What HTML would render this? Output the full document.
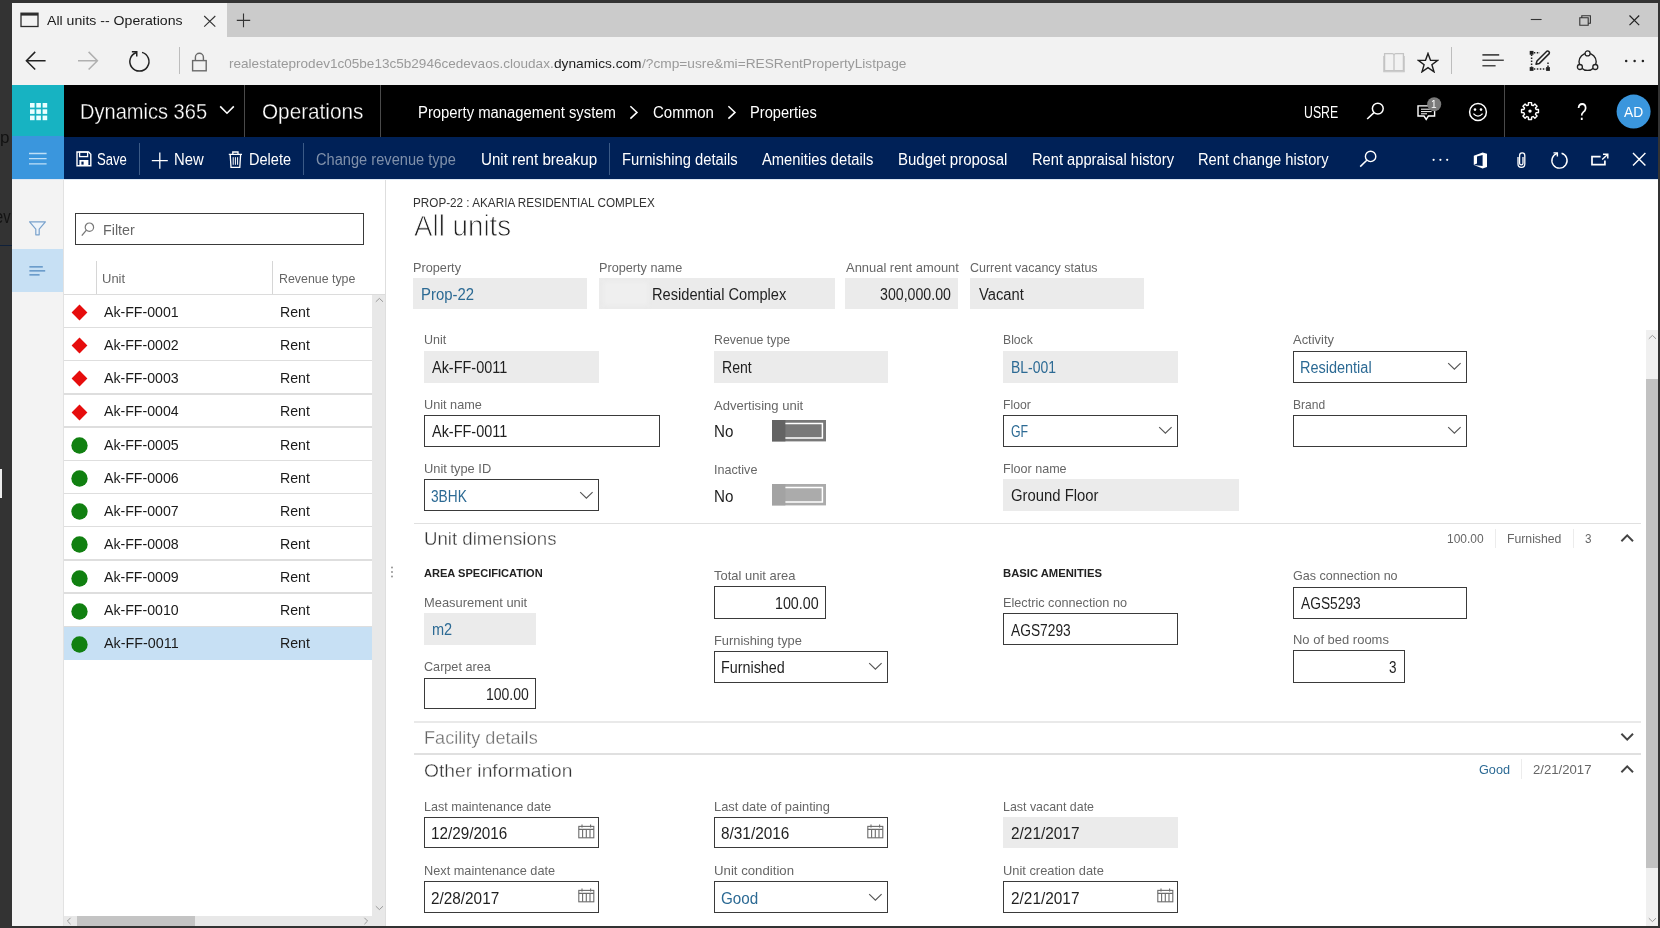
<!DOCTYPE html>
<html lang="en"><head><meta charset="utf-8"><title>All units -- Operations</title>
<style>
html,body{margin:0;padding:0}
body{width:1660px;height:928px;overflow:hidden;background:#333;position:relative;font-family:"Liberation Sans", sans-serif}
.b{position:absolute;display:block}
.t{position:absolute;white-space:pre;line-height:1;transform-origin:0 0;font-family:"Liberation Sans", sans-serif}
</style></head><body>
<div class="b" style="left:12.00px;top:3.00px;width:1646.00px;height:34.00px;background:#cbcbcb;"></div>
<div class="b" style="left:12.00px;top:3.00px;width:214.50px;height:34.00px;background:#f2f2f2;"></div>
<div class="b" style="left:12.00px;top:37.00px;width:1646.00px;height:48.00px;background:#f2f2f2;"></div>
<svg class="b" style="left:20.00px;top:12.00px;" width="19" height="16" viewBox="0 0 19 16"><rect x="1" y="1.2" width="17" height="13.3" fill="none" stroke="#2b2b2b" stroke-width="1.3"/><rect x="1" y="1.2" width="17" height="2.4" fill="#2b2b2b"/></svg>
<svg class="b" style="left:203.00px;top:14.50px;" width="14" height="13" viewBox="0 0 14 13"><path d="M1.2 1 L12.3 11.6 M12.3 1 L1.2 11.6" stroke="#333" stroke-width="1.1" fill="none"/></svg>
<svg class="b" style="left:236.00px;top:13.00px;" width="15" height="15" viewBox="0 0 15 15"><path d="M7.5 0.6 V14.2 M0.8 7.4 H14.2" stroke="#333" stroke-width="1.1" fill="none"/></svg>
<svg class="b" style="left:1530.00px;top:18.00px;" width="13" height="3" viewBox="0 0 13 3"><path d="M0.8 1.5 H11.6" stroke="#333" stroke-width="1.1"/></svg>
<svg class="b" style="left:1579.00px;top:15.00px;" width="13" height="11" viewBox="0 0 13 11"><path d="M0.8 2.8 H9.2 V10.2 H0.8 Z M2.8 2.8 V0.8 H11.4 V8.2 H9.2" stroke="#333" stroke-width="1.1" fill="none"/></svg>
<svg class="b" style="left:1629.00px;top:15.00px;" width="11" height="11" viewBox="0 0 11 11"><path d="M0.5 0.5 L10.2 10.2 M10.2 0.5 L0.5 10.2" stroke="#222" stroke-width="1.2" fill="none"/></svg>
<svg class="b" style="left:25.00px;top:51.00px;" width="22" height="20" viewBox="0 0 22 20"><path d="M20.6 9.7 H1.6 M10.2 0.9 L1.4 9.7 L10.2 18.5" stroke="#222" stroke-width="1.5" fill="none"/></svg>
<svg class="b" style="left:76.50px;top:51.00px;" width="22" height="20" viewBox="0 0 22 20"><path d="M1 9.7 H20 M11.6 0.9 L20.4 9.7 L11.6 18.5" stroke="#b0b0b0" stroke-width="1.5" fill="none"/></svg>
<svg class="b" style="left:127.15px;top:48.65px;" width="25.1" height="25.1" viewBox="0 0 25.1 25.1"><path d="M15.05 3.35 A9.55 9.55 0 1 1 9.45 3.45" stroke="#222" stroke-width="1.5" fill="none"/><path d="M4.85 2.85 H9.75 V7.55" stroke="#222" stroke-width="1.5" fill="none"/></svg>
<div class="b" style="left:179.00px;top:46.60px;width:1.20px;height:27.90px;background:#bdbdbd;"></div>
<svg class="b" style="left:190.50px;top:52.00px;" width="17" height="20" viewBox="0 0 17 20"><rect x="1.6" y="8.6" width="13.6" height="10.2" fill="none" stroke="#6a6a6a" stroke-width="1.4"/><path d="M4.4 8.6 V5.2 A4 4 0 0 1 12.4 5.2 V8.6" fill="none" stroke="#6a6a6a" stroke-width="1.4"/></svg>
<svg class="b" style="left:1383.00px;top:52.00px;" width="22" height="21" viewBox="0 0 22 21"><path d="M1.6 1.6 H9.4 Q11 1.8 11 3.4 V18.6 H1.6 Z M20.4 1.6 H12.6 Q11 1.8 11 3.4 V18.6 H20.4 Z" stroke="#c4c4c4" stroke-width="1.3" fill="none"/><path d="M0.8 4 V19.8 H21.2 V4" stroke="#c4c4c4" stroke-width="1.1" fill="none"/></svg>
<svg class="b" style="left:1417.00px;top:51.50px;" width="22" height="21" viewBox="0 0 22 21"><path d="M11 1.4 L13.5 8.3 L20.6 8.4 L14.9 12.8 L17 19.8 L11 15.6 L5 19.8 L7.1 12.8 L1.4 8.4 L8.5 8.3 Z" stroke="#1e1e1e" stroke-width="1.4" fill="none" stroke-linejoin="miter"/></svg>
<div class="b" style="left:1450.50px;top:46.60px;width:1.20px;height:27.90px;background:#bdbdbd;"></div>
<svg class="b" style="left:1481.00px;top:52.00px;" width="24" height="16" viewBox="0 0 24 16"><path d="M1.4 2.9 H18.2 M1.4 8.3 H22.8 M1.4 13.8 H14.6" stroke="#4a4a4a" stroke-width="1.6"/></svg>
<svg class="b" style="left:1528.50px;top:49.50px;" width="23" height="22" viewBox="0 0 23 22"><path d="M2.6 4.6 V17.4 M4.8 19 H17 M19 17 V11.2 M4.8 2.8 H11" stroke="#222" stroke-width="1.5" stroke-dasharray="1.5 1.5" fill="none"/><rect x="0.7" y="0.9" width="3.8" height="3.8" fill="#222"/><rect x="0.7" y="17.1" width="3.8" height="3.8" fill="#222"/><rect x="17.1" y="17.1" width="3.8" height="3.8" fill="#222"/><path d="M7 14.2 L8 11 L17.8 1.2 Q19.6 0.6 20.4 2.4 L20.2 3.6 L10.4 13.4 Z" stroke="#222" stroke-width="1.5" fill="none" stroke-linejoin="round"/></svg>
<svg class="b" style="left:1576.00px;top:49.50px;" width="24" height="22" viewBox="0 0 24 22"><circle cx="11.6" cy="11.8" r="8.6" fill="none" stroke="#222" stroke-width="1.4"/><circle cx="11.6" cy="3.4" r="2.5" fill="#f2f2f2" stroke="#222" stroke-width="1.3"/><circle cx="3.9" cy="17" r="2.5" fill="#f2f2f2" stroke="#222" stroke-width="1.3"/><circle cx="19.3" cy="17" r="2.5" fill="#f2f2f2" stroke="#222" stroke-width="1.3"/></svg>
<svg class="b" style="left:1624.00px;top:59.00px;" width="22" height="4" viewBox="0 0 22 4"><circle cx="2.2" cy="2" r="1.25" fill="#222"/><circle cx="10.6" cy="2" r="1.25" fill="#222"/><circle cx="18.9" cy="2" r="1.25" fill="#222"/></svg>
<div class="b" style="left:12.00px;top:85.00px;width:1646.00px;height:51.60px;background:#000;"></div>
<div class="b" style="left:12.00px;top:85.00px;width:51.70px;height:51.20px;background:#17b3c2;"></div>
<div class="b" style="left:244.20px;top:85.00px;width:1.20px;height:51.60px;background:#4a4a4a;"></div>
<div class="b" style="left:379.80px;top:85.00px;width:1.20px;height:51.60px;background:#4a4a4a;"></div>
<div class="b" style="left:1504.00px;top:85.00px;width:1.20px;height:51.60px;background:#4a4a4a;"></div>
<svg class="b" style="left:28.50px;top:102.00px;" width="19" height="19" viewBox="0 0 19 19"><rect x="1.0" y="1.0" width="4.6" height="4.6" fill="#eaffff"/><rect x="1.0" y="7.3" width="4.6" height="4.6" fill="#eaffff"/><rect x="1.0" y="13.6" width="4.6" height="4.6" fill="#eaffff"/><rect x="7.3" y="1.0" width="4.6" height="4.6" fill="#eaffff"/><rect x="7.3" y="7.3" width="4.6" height="4.6" fill="#eaffff"/><rect x="7.3" y="13.6" width="4.6" height="4.6" fill="#eaffff"/><rect x="13.6" y="1.0" width="4.6" height="4.6" fill="#eaffff"/><rect x="13.6" y="7.3" width="4.6" height="4.6" fill="#eaffff"/><rect x="13.6" y="13.6" width="4.6" height="4.6" fill="#eaffff"/></svg>
<svg class="b" style="left:218.50px;top:105.00px;" width="16" height="10" viewBox="0 0 16 10"><path d="M1.2 1.4 L8 8.2 L14.8 1.4" stroke="#fff" stroke-width="1.6" fill="none"/></svg>
<svg class="b" style="left:629.00px;top:104.50px;" width="10" height="15" viewBox="0 0 10 15"><path d="M1.4 1.2 L8 7.4 L1.4 13.6" stroke="#fff" stroke-width="1.5" fill="none"/></svg>
<svg class="b" style="left:727.00px;top:104.50px;" width="10" height="15" viewBox="0 0 10 15"><path d="M1.4 1.2 L8 7.4 L1.4 13.6" stroke="#fff" stroke-width="1.5" fill="none"/></svg>
<svg class="b" style="left:1365.50px;top:102.00px;" width="19" height="18" viewBox="0 0 19 18"><circle cx="11.8" cy="6.6" r="5.4" fill="none" stroke="#fff" stroke-width="1.5"/><path d="M8 10.6 L1.2 17" stroke="#fff" stroke-width="1.6"/></svg>
<svg class="b" style="left:1416.50px;top:104.50px;" width="19" height="16" viewBox="0 0 19 16"><path d="M1 0.9 H17.6 V11 H11.4 L9.2 14.4 L7 11 H1 Z" fill="none" stroke="#fff" stroke-width="1.4"/><path d="M4 4.2 H14.6 M4 6.6 H14.6 M4 8.8 H10" stroke="#fff" stroke-width="1"/></svg>
<svg class="b" style="left:1426.50px;top:97.00px;" width="15" height="15" viewBox="0 0 15 15"><circle cx="7.2" cy="7.2" r="7" fill="#7a7a7a"/></svg>
<svg class="b" style="left:1468.00px;top:101.50px;" width="20" height="20" viewBox="0 0 20 20"><circle cx="10" cy="10" r="8.4" fill="none" stroke="#fff" stroke-width="1.5"/><circle cx="7" cy="7.6" r="1.3" fill="#fff"/><circle cx="13" cy="7.6" r="1.3" fill="#fff"/><path d="M5.4 11.6 Q10 16.6 14.6 11.6" fill="none" stroke="#fff" stroke-width="1.4"/></svg>
<svg class="b" style="left:1520.30px;top:101.00px;" width="20" height="20" viewBox="0 0 20 20"><path d="M16.09 8.49 L18.46 8.55 L18.46 11.65 L16.09 11.71 L15.45 13.26 L17.07 14.99 L14.89 17.17 L13.16 15.55 L11.61 16.19 L11.55 18.56 L8.45 18.56 L8.39 16.19 L6.84 15.55 L5.11 17.17 L2.93 14.99 L4.55 13.26 L3.91 11.71 L1.54 11.65 L1.54 8.55 L3.91 8.49 L4.55 6.94 L2.93 5.21 L5.11 3.03 L6.84 4.65 L8.39 4.01 L8.45 1.64 L11.55 1.64 L11.61 4.01 L13.16 4.65 L14.89 3.03 L17.07 5.21 L15.45 6.94 Z" fill="none" stroke="#fff" stroke-width="1.4" stroke-linejoin="round"/><circle cx="10" cy="10.1" r="1.7" fill="#fff"/></svg>
<svg class="b" style="left:1616.00px;top:94.00px;" width="36" height="36" viewBox="0 0 36 36"><circle cx="17.6" cy="17.6" r="17" fill="#3a96dd"/></svg>
<div class="b" style="left:12.00px;top:136.60px;width:1646.00px;height:42.50px;background:#002157;"></div>
<div class="b" style="left:12.00px;top:136.20px;width:51.70px;height:42.90px;background:#3a96dd;"></div>
<svg class="b" style="left:28.00px;top:151.50px;" width="20" height="14" viewBox="0 0 20 14"><path d="M1 1.5 H18.6 M1 6.6 H18.6 M1 11.8 H18.6" stroke="#bfe0f7" stroke-width="1.3"/></svg>
<svg class="b" style="left:75.50px;top:151.00px;" width="16" height="16" viewBox="0 0 16 16"><path d="M1 1 H12.6 L14.8 3.2 V14.8 H1 Z" fill="none" stroke="#fff" stroke-width="1.4"/><rect x="3.6" y="1" width="8" height="4.6" fill="none" stroke="#fff" stroke-width="1.3"/><rect x="3.4" y="9" width="9" height="5.8" fill="#fff"/><rect x="5.4" y="10.6" width="2.2" height="3" fill="#002157"/></svg>
<div class="b" style="left:139.00px;top:143.00px;width:1.20px;height:31.50px;background:#3b5a86;"></div>
<svg class="b" style="left:151.00px;top:151.50px;" width="18" height="18" viewBox="0 0 18 18"><path d="M8.8 0.6 V16.8 M0.8 8.6 H16.8" stroke="#fff" stroke-width="1.3"/></svg>
<svg class="b" style="left:227.50px;top:151.00px;" width="15" height="18" viewBox="0 0 15 18"><path d="M0.8 3.4 H14 M4.8 3.2 V1 H10 V3.2 M2.2 3.6 L3 16.4 H11.8 L12.6 3.6" fill="none" stroke="#fff" stroke-width="1.3"/><path d="M5.2 6.2 V13.8 M7.4 6.2 V13.8 M9.6 6.2 V13.8" stroke="#fff" stroke-width="1"/></svg>
<div class="b" style="left:303.00px;top:143.00px;width:1.20px;height:31.50px;background:#3b5a86;"></div>
<div class="b" style="left:608.70px;top:143.00px;width:1.20px;height:31.50px;background:#3b5a86;"></div>
<svg class="b" style="left:1359.00px;top:149.50px;" width="19" height="18" viewBox="0 0 19 18"><circle cx="11.6" cy="6.4" r="5.2" fill="none" stroke="#fff" stroke-width="1.4"/><path d="M7.8 10.2 L1.2 16.6" stroke="#fff" stroke-width="1.5"/></svg>
<svg class="b" style="left:1432.00px;top:158.00px;" width="18" height="4" viewBox="0 0 18 4"><circle cx="1.6" cy="1.8" r="1.1" fill="#fff"/><circle cx="8.4" cy="1.8" r="1.1" fill="#fff"/><circle cx="15.2" cy="1.8" r="1.1" fill="#fff"/></svg>
<svg class="b" style="left:1473.00px;top:151.50px;" width="15" height="17" viewBox="0 0 15 17"><path d="M0.8 3.8 L9.6 0.6 L14 1.8 V15 L9.6 16.4 L0.8 13 L9.6 14 V3 L4 4.4 V11.6 L0.8 13 Z" fill="#fff"/></svg>
<svg class="b" style="left:1515.50px;top:151.00px;" width="11" height="18" viewBox="0 0 11 18"><path d="M2 6 V13 A3.4 3.4 0 0 0 8.8 13 V4.4 A2.6 2.6 0 0 0 3.6 4.4 V12.2 A1.7 1.7 0 0 0 7 12.2 V6" fill="none" stroke="#fff" stroke-width="1.3"/></svg>
<svg class="b" style="left:1549.20px;top:149.50px;" width="21.2" height="21.2" viewBox="0 0 21.2 21.2"><path d="M12.59 3.28 A7.60 7.60 0 1 1 8.13 3.36" stroke="#fff" stroke-width="1.4" fill="none"/><path d="M4.47 2.88 H8.37 V6.62" stroke="#fff" stroke-width="1.4" fill="none"/></svg>
<svg class="b" style="left:1590.50px;top:152.50px;" width="19" height="14" viewBox="0 0 19 14"><path d="M9.6 3.6 H1 V11.6 H13.9 V7.4" fill="none" stroke="#fff" stroke-width="1.7"/><path d="M12 1.2 H16.8 V5.6 M16.6 1.4 L11.2 6.4" fill="none" stroke="#fff" stroke-width="1.4"/></svg>
<svg class="b" style="left:1632.00px;top:152.30px;" width="15" height="15" viewBox="0 0 15 15"><path d="M1 1 L13.4 13.4 M13.4 1 L1 13.4" stroke="#fff" stroke-width="1.4"/></svg>
<div class="b" style="left:12.00px;top:179.30px;width:1646.00px;height:746.70px;background:#fff;"></div>
<div class="b" style="left:12.00px;top:179.30px;width:51.30px;height:746.70px;background:#f3f3f3;"></div>
<div class="b" style="left:12.00px;top:249.00px;width:51.30px;height:42.80px;background:#c7e0f4;"></div>
<div class="b" style="left:63.30px;top:179.30px;width:1.00px;height:746.70px;background:#e2e2e2;"></div>
<div class="b" style="left:385.00px;top:179.30px;width:1.20px;height:746.70px;background:#dedede;"></div>
<div class="b" style="left:12.00px;top:179.10px;width:1646.00px;height:1.10px;background:#dfe9f4;"></div>
<svg class="b" style="left:28.00px;top:220.00px;" width="20" height="18" viewBox="0 0 20 18"><path d="M1.6 1.8 H17.4 L11.2 9.2 V14.8 H7.8 V9.2 Z" fill="#eef4fa" stroke="#7aa2cc" stroke-width="1.2" stroke-linejoin="round"/></svg>
<svg class="b" style="left:29.00px;top:264.50px;" width="18" height="14" viewBox="0 0 18 14"><path d="M0.4 1.8 H13.8 M0.4 5.8 H16.2 M0.4 9.9 H10.6" stroke="#4f86bd" stroke-width="1.25"/></svg>
<div class="b" style="left:75.00px;top:213.30px;width:289.00px;height:31.70px;background:#fff;border:1.5px solid #3a3a3a;box-sizing:border-box;"></div>
<svg class="b" style="left:81.00px;top:222.00px;" width="14" height="15" viewBox="0 0 14 15"><circle cx="8.4" cy="5.2" r="4.2" fill="none" stroke="#777" stroke-width="1.2"/><path d="M5.4 8.2 L0.8 13.6" stroke="#777" stroke-width="1.3"/></svg>
<div class="b" style="left:96.00px;top:261.00px;width:1.20px;height:33.00px;background:#d6d6d6;"></div>
<div class="b" style="left:272.00px;top:261.00px;width:1.20px;height:33.00px;background:#d6d6d6;"></div>
<div class="b" style="left:64.30px;top:293.60px;width:320.70px;height:1.60px;background:#dcdcdc;"></div>
<div class="b" style="left:372.40px;top:295.00px;width:12.60px;height:631.00px;background:#e8e8e8;"></div>
<svg class="b" style="left:374.50px;top:297.00px;" width="9" height="6" viewBox="0 0 9 6"><path d="M0.8 4.8 L4.4 1.4 L8 4.8" stroke="#9a9a9a" stroke-width="1" fill="none"/></svg>
<svg class="b" style="left:374.50px;top:904.50px;" width="9" height="6" viewBox="0 0 9 6"><path d="M0.8 1.2 L4.4 4.6 L8 1.2" stroke="#9a9a9a" stroke-width="1" fill="none"/></svg>
<div class="b" style="left:64.30px;top:916.00px;width:308.10px;height:10.00px;background:#e8e8e8;"></div>
<div class="b" style="left:76.50px;top:916.00px;width:118.50px;height:10.00px;background:#c4c4c4;"></div>
<svg class="b" style="left:66.00px;top:917.20px;" width="6" height="8" viewBox="0 0 6 8"><path d="M4.6 0.8 L1.4 4 L4.6 7.2" stroke="#9a9a9a" stroke-width="1" fill="none"/></svg>
<svg class="b" style="left:363.00px;top:917.20px;" width="6" height="8" viewBox="0 0 6 8"><path d="M1.4 0.8 L4.6 4 L1.4 7.2" stroke="#9a9a9a" stroke-width="1" fill="none"/></svg>
<div class="b" style="left:64.30px;top:326.80px;width:308.10px;height:1.40px;background:#dedede;"></div>
<svg class="b" style="left:71.20px;top:304.00px;" width="17" height="17" viewBox="0 0 17 17"><path d="M8.5 0.5 L16.4 8.5 L8.5 16.5 L0.6 8.5 Z" fill="#e60d0d"/></svg>
<div class="b" style="left:64.30px;top:360.00px;width:308.10px;height:1.40px;background:#dedede;"></div>
<svg class="b" style="left:71.20px;top:337.20px;" width="17" height="17" viewBox="0 0 17 17"><path d="M8.5 0.5 L16.4 8.5 L8.5 16.5 L0.6 8.5 Z" fill="#e60d0d"/></svg>
<div class="b" style="left:64.30px;top:393.20px;width:308.10px;height:1.40px;background:#dedede;"></div>
<svg class="b" style="left:71.20px;top:370.40px;" width="17" height="17" viewBox="0 0 17 17"><path d="M8.5 0.5 L16.4 8.5 L8.5 16.5 L0.6 8.5 Z" fill="#e60d0d"/></svg>
<div class="b" style="left:64.30px;top:426.40px;width:308.10px;height:1.40px;background:#dedede;"></div>
<svg class="b" style="left:71.20px;top:403.60px;" width="17" height="17" viewBox="0 0 17 17"><path d="M8.5 0.5 L16.4 8.5 L8.5 16.5 L0.6 8.5 Z" fill="#e60d0d"/></svg>
<div class="b" style="left:64.30px;top:459.60px;width:308.10px;height:1.40px;background:#dedede;"></div>
<svg class="b" style="left:71.30px;top:436.80px;" width="17" height="17" viewBox="0 0 17 17"><circle cx="8.5" cy="8.5" r="8.15" fill="#118011"/></svg>
<div class="b" style="left:64.30px;top:492.80px;width:308.10px;height:1.40px;background:#dedede;"></div>
<svg class="b" style="left:71.30px;top:470.00px;" width="17" height="17" viewBox="0 0 17 17"><circle cx="8.5" cy="8.5" r="8.15" fill="#118011"/></svg>
<div class="b" style="left:64.30px;top:526.00px;width:308.10px;height:1.40px;background:#dedede;"></div>
<svg class="b" style="left:71.30px;top:503.20px;" width="17" height="17" viewBox="0 0 17 17"><circle cx="8.5" cy="8.5" r="8.15" fill="#118011"/></svg>
<div class="b" style="left:64.30px;top:559.20px;width:308.10px;height:1.40px;background:#dedede;"></div>
<svg class="b" style="left:71.30px;top:536.40px;" width="17" height="17" viewBox="0 0 17 17"><circle cx="8.5" cy="8.5" r="8.15" fill="#118011"/></svg>
<div class="b" style="left:64.30px;top:592.40px;width:308.10px;height:1.40px;background:#dedede;"></div>
<svg class="b" style="left:71.30px;top:569.60px;" width="17" height="17" viewBox="0 0 17 17"><circle cx="8.5" cy="8.5" r="8.15" fill="#118011"/></svg>
<div class="b" style="left:64.30px;top:625.60px;width:308.10px;height:1.40px;background:#dedede;"></div>
<svg class="b" style="left:71.30px;top:602.80px;" width="17" height="17" viewBox="0 0 17 17"><circle cx="8.5" cy="8.5" r="8.15" fill="#118011"/></svg>
<div class="b" style="left:64.30px;top:626.90px;width:308.10px;height:33.00px;background:#c7e0f4;"></div>
<svg class="b" style="left:71.30px;top:636.00px;" width="17" height="17" viewBox="0 0 17 17"><circle cx="8.5" cy="8.5" r="8.15" fill="#118011"/></svg>
<svg class="b" style="left:390.00px;top:566.00px;" width="4" height="12" viewBox="0 0 4 12"><circle cx="2" cy="1.5" r="0.9" fill="#888"/><circle cx="2" cy="6" r="0.9" fill="#888"/><circle cx="2" cy="10.5" r="0.9" fill="#888"/></svg>
<div class="b" style="left:413.30px;top:277.50px;width:174.20px;height:31.30px;background:#ebebeb;"></div>
<div class="b" style="left:598.80px;top:277.50px;width:236.00px;height:31.30px;background:#ebebeb;"></div>
<div class="b" style="left:604.00px;top:282.00px;width:44.00px;height:23.00px;background:#efefef;filter:blur(2px);"></div>
<div class="b" style="left:845.00px;top:277.50px;width:113.20px;height:31.30px;background:#ebebeb;"></div>
<div class="b" style="left:969.80px;top:277.50px;width:174.20px;height:31.30px;background:#ebebeb;"></div>
<div class="b" style="left:424.00px;top:350.50px;width:174.80px;height:32.10px;background:#ebebeb;"></div>
<div class="b" style="left:713.60px;top:350.50px;width:174.40px;height:32.10px;background:#ebebeb;"></div>
<div class="b" style="left:1003.20px;top:350.50px;width:174.50px;height:32.10px;background:#ebebeb;"></div>
<div class="b" style="left:1293.00px;top:350.80px;width:174.00px;height:32.00px;background:#fff;border:1.5px solid #3a3a3a;box-sizing:border-box;"></div>
<svg class="b" style="left:1447.00px;top:361.90px;" width="15" height="9" viewBox="0 0 15 9"><path d="M1.2 1.2 L7.4 7.2 L13.6 1.2" stroke="#555" stroke-width="1.15" fill="none"/></svg>
<div class="b" style="left:424.00px;top:414.60px;width:236.00px;height:32.20px;background:#fff;border:1.5px solid #3a3a3a;box-sizing:border-box;"></div>
<svg class="b" style="left:772.00px;top:419.80px;" width="54" height="22" viewBox="0 0 54 22"><rect x="0" y="0" width="54" height="21.4" fill="#787878"/><rect x="0" y="0" width="13.4" height="21.4" fill="#636363"/><path d="M13.4 3.5 H50.4 V17.9 H13.4" fill="none" stroke="#fff" stroke-width="1.5"/></svg>
<div class="b" style="left:1003.20px;top:415.00px;width:174.50px;height:31.80px;background:#fff;border:1.5px solid #3a3a3a;box-sizing:border-box;"></div>
<svg class="b" style="left:1158.00px;top:426.40px;" width="15" height="9" viewBox="0 0 15 9"><path d="M1.2 1.2 L7.4 7.2 L13.6 1.2" stroke="#555" stroke-width="1.15" fill="none"/></svg>
<div class="b" style="left:1293.00px;top:415.00px;width:174.00px;height:31.80px;background:#fff;border:1.5px solid #3a3a3a;box-sizing:border-box;"></div>
<svg class="b" style="left:1447.00px;top:426.40px;" width="15" height="9" viewBox="0 0 15 9"><path d="M1.2 1.2 L7.4 7.2 L13.6 1.2" stroke="#555" stroke-width="1.15" fill="none"/></svg>
<div class="b" style="left:424.00px;top:479.30px;width:175.00px;height:32.20px;background:#fff;border:1.5px solid #3a3a3a;box-sizing:border-box;"></div>
<svg class="b" style="left:578.50px;top:490.90px;" width="15" height="9" viewBox="0 0 15 9"><path d="M1.2 1.2 L7.4 7.2 L13.6 1.2" stroke="#555" stroke-width="1.15" fill="none"/></svg>
<svg class="b" style="left:772.00px;top:484.00px;" width="54" height="22" viewBox="0 0 54 22"><rect x="0" y="0" width="54" height="21.4" fill="#ababab"/><rect x="0" y="0" width="13.4" height="21.4" fill="#a3a3a3"/><path d="M13.4 3.5 H50.4 V17.9 H13.4" fill="none" stroke="#fff" stroke-width="1.5"/></svg>
<div class="b" style="left:1003.20px;top:479.00px;width:235.80px;height:31.80px;background:#ebebeb;"></div>
<div class="b" style="left:413.50px;top:522.60px;width:1227.50px;height:1.50px;background:#e0e0e0;"></div>
<div class="b" style="left:1494.60px;top:529.00px;width:1.00px;height:19.00px;background:#ececec;"></div>
<div class="b" style="left:1572.60px;top:529.00px;width:1.00px;height:19.00px;background:#ececec;"></div>
<svg class="b" style="left:1619.50px;top:533.00px;" width="15" height="10" viewBox="0 0 15 10"><path d="M1.4 8.2 L7.2 2.4 L13 8.2" stroke="#444" stroke-width="2" fill="none"/></svg>
<div class="b" style="left:424.00px;top:613.00px;width:112.20px;height:32.00px;background:#ebebeb;"></div>
<div class="b" style="left:424.00px;top:677.60px;width:112.20px;height:31.80px;background:#fff;border:1.5px solid #3a3a3a;box-sizing:border-box;"></div>
<div class="b" style="left:713.60px;top:586.40px;width:112.20px;height:32.20px;background:#fff;border:1.5px solid #3a3a3a;box-sizing:border-box;"></div>
<div class="b" style="left:713.60px;top:650.60px;width:174.40px;height:32.20px;background:#fff;border:1.5px solid #3a3a3a;box-sizing:border-box;"></div>
<svg class="b" style="left:867.50px;top:662.40px;" width="15" height="9" viewBox="0 0 15 9"><path d="M1.2 1.2 L7.4 7.2 L13.6 1.2" stroke="#555" stroke-width="1.15" fill="none"/></svg>
<div class="b" style="left:1003.20px;top:613.30px;width:174.50px;height:32.00px;background:#fff;border:1.5px solid #3a3a3a;box-sizing:border-box;"></div>
<div class="b" style="left:1293.00px;top:586.70px;width:174.00px;height:32.10px;background:#fff;border:1.5px solid #3a3a3a;box-sizing:border-box;"></div>
<div class="b" style="left:1293.00px;top:650.40px;width:112.00px;height:32.60px;background:#fff;border:1.5px solid #3a3a3a;box-sizing:border-box;"></div>
<div class="b" style="left:413.50px;top:721.00px;width:1227.50px;height:1.50px;background:#e9e9e9;"></div>
<svg class="b" style="left:1619.50px;top:731.50px;" width="15" height="10" viewBox="0 0 15 10"><path d="M1.4 1.8 L7.2 7.6 L13 1.8" stroke="#444" stroke-width="2" fill="none"/></svg>
<div class="b" style="left:413.50px;top:753.00px;width:1227.50px;height:1.50px;background:#e0e0e0;"></div>
<div class="b" style="left:1521.20px;top:759.00px;width:1.00px;height:20.00px;background:#ececec;"></div>
<svg class="b" style="left:1619.50px;top:764.00px;" width="15" height="10" viewBox="0 0 15 10"><path d="M1.4 8.2 L7.2 2.4 L13 8.2" stroke="#444" stroke-width="2" fill="none"/></svg>
<div class="b" style="left:424.00px;top:816.80px;width:175.00px;height:31.40px;background:#fff;border:1.5px solid #3a3a3a;box-sizing:border-box;"></div>
<svg class="b" style="left:577.50px;top:823.50px;" width="17" height="15" viewBox="0 0 17 15"><rect x="0.8" y="2.4" width="15" height="11.4" fill="none" stroke="#6c6c6c" stroke-width="1.1"/><path d="M0.8 5.4 H15.8 M4.6 5.4 V13.8 M8.3 5.4 V13.8 M12 5.4 V13.8 M4 0.6 V3.4 M12.6 0.6 V3.4" stroke="#6c6c6c" stroke-width="1.1"/></svg>
<div class="b" style="left:424.00px;top:881.40px;width:175.00px;height:31.20px;background:#fff;border:1.5px solid #3a3a3a;box-sizing:border-box;"></div>
<svg class="b" style="left:577.50px;top:888.00px;" width="17" height="15" viewBox="0 0 17 15"><rect x="0.8" y="2.4" width="15" height="11.4" fill="none" stroke="#6c6c6c" stroke-width="1.1"/><path d="M0.8 5.4 H15.8 M4.6 5.4 V13.8 M8.3 5.4 V13.8 M12 5.4 V13.8 M4 0.6 V3.4 M12.6 0.6 V3.4" stroke="#6c6c6c" stroke-width="1.1"/></svg>
<div class="b" style="left:713.60px;top:816.80px;width:174.40px;height:31.40px;background:#fff;border:1.5px solid #3a3a3a;box-sizing:border-box;"></div>
<svg class="b" style="left:866.50px;top:823.50px;" width="17" height="15" viewBox="0 0 17 15"><rect x="0.8" y="2.4" width="15" height="11.4" fill="none" stroke="#6c6c6c" stroke-width="1.1"/><path d="M0.8 5.4 H15.8 M4.6 5.4 V13.8 M8.3 5.4 V13.8 M12 5.4 V13.8 M4 0.6 V3.4 M12.6 0.6 V3.4" stroke="#6c6c6c" stroke-width="1.1"/></svg>
<div class="b" style="left:713.60px;top:881.40px;width:174.40px;height:31.20px;background:#fff;border:1.5px solid #3a3a3a;box-sizing:border-box;"></div>
<svg class="b" style="left:867.50px;top:892.90px;" width="15" height="9" viewBox="0 0 15 9"><path d="M1.2 1.2 L7.4 7.2 L13.6 1.2" stroke="#555" stroke-width="1.15" fill="none"/></svg>
<div class="b" style="left:1003.20px;top:816.60px;width:174.50px;height:31.80px;background:#ebebeb;"></div>
<div class="b" style="left:1003.20px;top:881.20px;width:174.50px;height:31.40px;background:#fff;border:1.5px solid #3a3a3a;box-sizing:border-box;"></div>
<svg class="b" style="left:1157.00px;top:888.40px;" width="17" height="15" viewBox="0 0 17 15"><rect x="0.8" y="2.4" width="15" height="11.4" fill="none" stroke="#6c6c6c" stroke-width="1.1"/><path d="M0.8 5.4 H15.8 M4.6 5.4 V13.8 M8.3 5.4 V13.8 M12 5.4 V13.8 M4 0.6 V3.4 M12.6 0.6 V3.4" stroke="#6c6c6c" stroke-width="1.1"/></svg>
<div class="b" style="left:1645.50px;top:330.00px;width:12.50px;height:596.00px;background:#f0f0f0;"></div>
<div class="b" style="left:1645.50px;top:379.00px;width:12.50px;height:489.00px;background:#c2c2c2;"></div>
<svg class="b" style="left:1647.50px;top:334.00px;" width="9" height="6" viewBox="0 0 9 6"><path d="M0.8 4.8 L4.4 1.4 L8 4.8" stroke="#9a9a9a" stroke-width="1" fill="none"/></svg>
<svg class="b" style="left:1647.50px;top:917.00px;" width="9" height="6" viewBox="0 0 9 6"><path d="M0.8 1.2 L4.4 4.6 L8 1.2" stroke="#9a9a9a" stroke-width="1" fill="none"/></svg>
<div class="b" style="left:0.00px;top:244.60px;width:12.00px;height:1.60px;background:#10213a;"></div>
<div class="b" style="left:0.00px;top:469.00px;width:1.50px;height:29.00px;background:#eee;"></div>
<span class="t" style="left:47.40px;top:14.00px;font-size:13.3px;color:#1a1a1a;transform:scaleX(1.0605);">All units -- Operations</span>
<span class="t" style="left:229.30px;top:57.00px;font-size:13.4px;color:#9a9a9a;transform:scaleX(1.0119);">realestateprodev1c05be13c5b2946cedevaos.cloudax.</span>
<span class="t" style="left:554.00px;top:57.00px;font-size:13.4px;color:#1e1e1e;transform:scaleX(1.0225);">dynamics.com</span>
<span class="t" style="left:641.50px;top:57.00px;font-size:13.4px;color:#9a9a9a;transform:scaleX(1.0241);">/?cmp=usre&amp;mi=RESRentPropertyListpage</span>
<span class="t" style="left:80.10px;top:101.00px;font-size:21.9px;color:#fff;transform:scaleX(0.9163);-webkit-text-stroke:0.3px #000;">Dynamics 365</span>
<span class="t" style="left:261.80px;top:101.00px;font-size:21.9px;color:#fff;transform:scaleX(0.9468);-webkit-text-stroke:0.3px #000;">Operations</span>
<span class="t" style="left:417.60px;top:105.00px;font-size:15.8px;color:#fff;transform:scaleX(0.9392);">Property management system</span>
<span class="t" style="left:652.60px;top:105.00px;font-size:15.8px;color:#fff;transform:scaleX(0.9502);">Common</span>
<span class="t" style="left:750.30px;top:105.00px;font-size:15.8px;color:#fff;transform:scaleX(0.9264);">Properties</span>
<span class="t" style="left:1304.00px;top:105.00px;font-size:15.8px;color:#fff;transform:scaleX(0.7792);">USRE</span>
<span class="t" style="left:1430.80px;top:99.00px;font-size:11px;color:#fff;transform:scaleX(0.9143);">1</span>
<span class="t" style="left:1576.50px;top:101.00px;font-size:23px;color:#fff;transform:scaleX(0.7893);">?</span>
<span class="t" style="left:1624.30px;top:105.00px;font-size:14.4px;color:#fff;transform:scaleX(0.9600);">AD</span>
<span class="t" style="left:97.40px;top:152.00px;font-size:15.8px;color:#fff;transform:scaleX(0.8302);">Save</span>
<span class="t" style="left:174.00px;top:152.00px;font-size:15.8px;color:#fff;transform:scaleX(0.9396);">New</span>
<span class="t" style="left:249.00px;top:152.00px;font-size:15.8px;color:#fff;transform:scaleX(0.9196);">Delete</span>
<span class="t" style="left:316.30px;top:152.00px;font-size:15.8px;color:#7f90aa;transform:scaleX(0.9261);">Change revenue type</span>
<span class="t" style="left:480.80px;top:152.00px;font-size:15.8px;color:#fff;transform:scaleX(0.9580);">Unit rent breakup</span>
<span class="t" style="left:622.30px;top:152.00px;font-size:15.8px;color:#fff;transform:scaleX(0.9345);">Furnishing details</span>
<span class="t" style="left:762.00px;top:152.00px;font-size:15.8px;color:#fff;transform:scaleX(0.9337);">Amenities details</span>
<span class="t" style="left:898.10px;top:152.00px;font-size:15.8px;color:#fff;transform:scaleX(0.9508);">Budget proposal</span>
<span class="t" style="left:1032.00px;top:152.00px;font-size:15.8px;color:#fff;transform:scaleX(0.9294);">Rent appraisal history</span>
<span class="t" style="left:1198.40px;top:152.00px;font-size:15.8px;color:#fff;transform:scaleX(0.9295);">Rent change history</span>
<span class="t" style="left:103.00px;top:222.00px;font-size:15.4px;color:#666;transform:scaleX(0.9297);">Filter</span>
<span class="t" style="left:102.40px;top:273.00px;font-size:12.6px;color:#666;transform:scaleX(1.0310);">Unit</span>
<span class="t" style="left:278.60px;top:273.00px;font-size:12.6px;color:#666;transform:scaleX(0.9830);">Revenue type</span>
<span class="t" style="left:104.10px;top:305.00px;font-size:14.8px;color:#1a1a1a;transform:scaleX(0.9562);">Ak-FF-0001</span>
<span class="t" style="left:279.60px;top:305.00px;font-size:14.8px;color:#1a1a1a;transform:scaleX(0.9563);">Rent</span>
<span class="t" style="left:104.10px;top:338.00px;font-size:14.8px;color:#1a1a1a;transform:scaleX(0.9562);">Ak-FF-0002</span>
<span class="t" style="left:279.60px;top:338.00px;font-size:14.8px;color:#1a1a1a;transform:scaleX(0.9563);">Rent</span>
<span class="t" style="left:104.10px;top:371.00px;font-size:14.8px;color:#1a1a1a;transform:scaleX(0.9562);">Ak-FF-0003</span>
<span class="t" style="left:279.60px;top:371.00px;font-size:14.8px;color:#1a1a1a;transform:scaleX(0.9563);">Rent</span>
<span class="t" style="left:104.10px;top:404.00px;font-size:14.8px;color:#1a1a1a;transform:scaleX(0.9562);">Ak-FF-0004</span>
<span class="t" style="left:279.60px;top:404.00px;font-size:14.8px;color:#1a1a1a;transform:scaleX(0.9563);">Rent</span>
<span class="t" style="left:104.10px;top:438.00px;font-size:14.8px;color:#1a1a1a;transform:scaleX(0.9562);">Ak-FF-0005</span>
<span class="t" style="left:279.60px;top:438.00px;font-size:14.8px;color:#1a1a1a;transform:scaleX(0.9563);">Rent</span>
<span class="t" style="left:104.10px;top:471.00px;font-size:14.8px;color:#1a1a1a;transform:scaleX(0.9562);">Ak-FF-0006</span>
<span class="t" style="left:279.60px;top:471.00px;font-size:14.8px;color:#1a1a1a;transform:scaleX(0.9563);">Rent</span>
<span class="t" style="left:104.10px;top:504.00px;font-size:14.8px;color:#1a1a1a;transform:scaleX(0.9562);">Ak-FF-0007</span>
<span class="t" style="left:279.60px;top:504.00px;font-size:14.8px;color:#1a1a1a;transform:scaleX(0.9563);">Rent</span>
<span class="t" style="left:104.10px;top:537.00px;font-size:14.8px;color:#1a1a1a;transform:scaleX(0.9562);">Ak-FF-0008</span>
<span class="t" style="left:279.60px;top:537.00px;font-size:14.8px;color:#1a1a1a;transform:scaleX(0.9563);">Rent</span>
<span class="t" style="left:104.10px;top:570.00px;font-size:14.8px;color:#1a1a1a;transform:scaleX(0.9562);">Ak-FF-0009</span>
<span class="t" style="left:279.60px;top:570.00px;font-size:14.8px;color:#1a1a1a;transform:scaleX(0.9563);">Rent</span>
<span class="t" style="left:104.10px;top:603.00px;font-size:14.8px;color:#1a1a1a;transform:scaleX(0.9562);">Ak-FF-0010</span>
<span class="t" style="left:279.60px;top:603.00px;font-size:14.8px;color:#1a1a1a;transform:scaleX(0.9563);">Rent</span>
<span class="t" style="left:104.10px;top:636.00px;font-size:14.8px;color:#1a1a1a;transform:scaleX(0.9697);">Ak-FF-0011</span>
<span class="t" style="left:279.60px;top:636.00px;font-size:14.8px;color:#1a1a1a;transform:scaleX(0.9563);">Rent</span>
<span class="t" style="left:413.30px;top:196.00px;font-size:13.6px;color:#333;transform:scaleX(0.8616);">PROP-22 : AKARIA RESIDENTIAL COMPLEX</span>
<span class="t" style="left:414.00px;top:210.00px;font-size:30.4px;color:#222;transform:scaleX(0.9133);-webkit-text-stroke:0.9px #fff;">All units</span>
<span class="t" style="left:413.30px;top:262.00px;font-size:12.1px;color:#666;transform:scaleX(1.0499);">Property</span>
<span class="t" style="left:421.30px;top:287.00px;font-size:16px;color:#2c6a94;transform:scaleX(0.9311);">Prop-22</span>
<span class="t" style="left:598.80px;top:262.00px;font-size:12.1px;color:#666;transform:scaleX(1.0488);">Property name</span>
<span class="t" style="left:652.00px;top:287.00px;font-size:16px;color:#1f1f1f;transform:scaleX(0.9153);">Residential Complex</span>
<span class="t" style="left:845.70px;top:262.00px;font-size:12.1px;color:#666;transform:scaleX(1.0695);">Annual rent amount</span>
<span class="t" style="left:879.60px;top:287.00px;font-size:16px;color:#1f1f1f;transform:scaleX(0.8854);">300,000.00</span>
<span class="t" style="left:969.80px;top:262.00px;font-size:12.1px;color:#666;transform:scaleX(1.0316);">Current vacancy status</span>
<span class="t" style="left:978.70px;top:287.00px;font-size:16px;color:#1f1f1f;transform:scaleX(0.9213);">Vacant</span>
<span class="t" style="left:424.30px;top:334.00px;font-size:12.1px;color:#666;transform:scaleX(1.0318);">Unit</span>
<span class="t" style="left:431.80px;top:360.00px;font-size:16px;color:#1f1f1f;transform:scaleX(0.9030);">Ak-FF-0011</span>
<span class="t" style="left:713.60px;top:334.00px;font-size:12.1px;color:#666;transform:scaleX(1.0209);">Revenue type</span>
<span class="t" style="left:722.30px;top:360.00px;font-size:16px;color:#1f1f1f;transform:scaleX(0.8788);">Rent</span>
<span class="t" style="left:1003.20px;top:334.00px;font-size:12.1px;color:#666;transform:scaleX(1.0075);">Block</span>
<span class="t" style="left:1010.70px;top:360.00px;font-size:16px;color:#2c6a94;transform:scaleX(0.8722);">BL-001</span>
<span class="t" style="left:1293.00px;top:334.00px;font-size:12.1px;color:#666;transform:scaleX(1.0701);">Activity</span>
<span class="t" style="left:1300.20px;top:360.00px;font-size:16px;color:#2c6a94;transform:scaleX(0.9045);">Residential</span>
<span class="t" style="left:424.30px;top:399.00px;font-size:12.1px;color:#666;transform:scaleX(1.0503);">Unit name</span>
<span class="t" style="left:431.80px;top:424.00px;font-size:16px;color:#1f1f1f;transform:scaleX(0.9030);">Ak-FF-0011</span>
<span class="t" style="left:713.60px;top:400.00px;font-size:12.1px;color:#666;transform:scaleX(1.0788);">Advertising unit</span>
<span class="t" style="left:713.80px;top:424.00px;font-size:16px;color:#1f1f1f;transform:scaleX(0.9485);">No</span>
<span class="t" style="left:1003.20px;top:399.00px;font-size:12.1px;color:#666;transform:scaleX(1.0086);">Floor</span>
<span class="t" style="left:1010.70px;top:424.00px;font-size:16px;color:#2c6a94;transform:scaleX(0.7696);">GF</span>
<span class="t" style="left:1293.00px;top:399.00px;font-size:12.1px;color:#666;transform:scaleX(0.9975);">Brand</span>
<span class="t" style="left:424.30px;top:463.00px;font-size:12.1px;color:#666;transform:scaleX(1.0635);">Unit type ID</span>
<span class="t" style="left:431.30px;top:489.00px;font-size:16px;color:#2c6a94;transform:scaleX(0.8565);">3BHK</span>
<span class="t" style="left:713.60px;top:464.00px;font-size:12.1px;color:#666;transform:scaleX(1.0411);">Inactive</span>
<span class="t" style="left:713.80px;top:489.00px;font-size:16px;color:#1f1f1f;transform:scaleX(0.9485);">No</span>
<span class="t" style="left:1003.20px;top:463.00px;font-size:12.1px;color:#666;transform:scaleX(1.0397);">Floor name</span>
<span class="t" style="left:1010.70px;top:488.00px;font-size:16px;color:#1f1f1f;transform:scaleX(0.9282);">Ground Floor</span>
<span class="t" style="left:424.30px;top:530.00px;font-size:18.6px;color:#333;transform:scaleX(1.0017);-webkit-text-stroke:0.35px #fff;">Unit dimensions</span>
<span class="t" style="left:1447.30px;top:533.00px;font-size:12.4px;color:#666;transform:scaleX(0.9655);">100.00</span>
<span class="t" style="left:1507.00px;top:533.00px;font-size:12.4px;color:#666;transform:scaleX(0.9871);">Furnished</span>
<span class="t" style="left:1584.50px;top:533.00px;font-size:12.4px;color:#666;transform:scaleX(0.9412);">3</span>
<span class="t" style="left:424.30px;top:567.00px;font-size:11.6px;color:#222;transform:scaleX(0.9547);font-weight:700;">AREA SPECIFICATION</span>
<span class="t" style="left:424.30px;top:597.00px;font-size:12.1px;color:#666;transform:scaleX(1.0660);">Measurement unit</span>
<span class="t" style="left:431.80px;top:622.00px;font-size:16px;color:#2c6a94;transform:scaleX(0.9085);">m2</span>
<span class="t" style="left:424.30px;top:661.00px;font-size:12.1px;color:#666;transform:scaleX(1.0442);">Carpet area</span>
<span class="t" style="left:486.00px;top:687.00px;font-size:16px;color:#1f1f1f;transform:scaleX(0.8746);">100.00</span>
<span class="t" style="left:713.60px;top:570.00px;font-size:12.1px;color:#666;transform:scaleX(1.0713);">Total unit area</span>
<span class="t" style="left:775.10px;top:596.00px;font-size:16px;color:#1f1f1f;transform:scaleX(0.8909);">100.00</span>
<span class="t" style="left:713.60px;top:635.00px;font-size:12.1px;color:#666;transform:scaleX(1.0630);">Furnishing type</span>
<span class="t" style="left:721.20px;top:660.00px;font-size:16px;color:#1f1f1f;transform:scaleX(0.8966);">Furnished</span>
<span class="t" style="left:1003.20px;top:567.00px;font-size:11.6px;color:#222;transform:scaleX(0.9706);font-weight:700;">BASIC AMENITIES</span>
<span class="t" style="left:1003.20px;top:597.00px;font-size:12.1px;color:#666;transform:scaleX(1.0479);">Electric connection no</span>
<span class="t" style="left:1010.70px;top:623.00px;font-size:16px;color:#1f1f1f;transform:scaleX(0.8603);">AGS7293</span>
<span class="t" style="left:1293.00px;top:570.00px;font-size:12.1px;color:#666;transform:scaleX(1.0371);">Gas connection no</span>
<span class="t" style="left:1300.50px;top:596.00px;font-size:16px;color:#1f1f1f;transform:scaleX(0.8603);">AGS5293</span>
<span class="t" style="left:1293.00px;top:634.00px;font-size:12.1px;color:#666;transform:scaleX(1.0726);">No of bed rooms</span>
<span class="t" style="left:1388.90px;top:660.00px;font-size:16px;color:#1f1f1f;transform:scaleX(0.8421);">3</span>
<span class="t" style="left:424.30px;top:729.00px;font-size:18.6px;color:#666;transform:scaleX(0.9737);-webkit-text-stroke:0.35px #fff;">Facility details</span>
<span class="t" style="left:424.30px;top:762.00px;font-size:18.6px;color:#333;transform:scaleX(1.0330);-webkit-text-stroke:0.35px #fff;">Other information</span>
<span class="t" style="left:1479.00px;top:764.00px;font-size:12.4px;color:#2c6a94;transform:scaleX(1.0227);">Good</span>
<span class="t" style="left:1532.80px;top:764.00px;font-size:12.4px;color:#666;transform:scaleX(1.0612);">2/21/2017</span>
<span class="t" style="left:424.30px;top:801.00px;font-size:12.1px;color:#666;transform:scaleX(1.0394);">Last maintenance date</span>
<span class="t" style="left:431.30px;top:826.00px;font-size:16px;color:#1f1f1f;transform:scaleX(0.9528);">12/29/2016</span>
<span class="t" style="left:424.30px;top:865.00px;font-size:12.1px;color:#666;transform:scaleX(1.0541);">Next maintenance date</span>
<span class="t" style="left:431.30px;top:891.00px;font-size:16px;color:#1f1f1f;transform:scaleX(0.9580);">2/28/2017</span>
<span class="t" style="left:713.60px;top:801.00px;font-size:12.1px;color:#666;transform:scaleX(1.0639);">Last date of painting</span>
<span class="t" style="left:720.60px;top:826.00px;font-size:16px;color:#1f1f1f;transform:scaleX(0.9608);">8/31/2016</span>
<span class="t" style="left:713.60px;top:865.00px;font-size:12.1px;color:#666;transform:scaleX(1.0917);">Unit condition</span>
<span class="t" style="left:720.60px;top:891.00px;font-size:16px;color:#2c6a94;transform:scaleX(0.9504);">Good</span>
<span class="t" style="left:1003.20px;top:801.00px;font-size:12.1px;color:#666;transform:scaleX(1.0254);">Last vacant date</span>
<span class="t" style="left:1011.00px;top:826.00px;font-size:16px;color:#1f1f1f;transform:scaleX(0.9622);">2/21/2017</span>
<span class="t" style="left:1003.20px;top:865.00px;font-size:12.1px;color:#666;transform:scaleX(1.0633);">Unit creation date</span>
<span class="t" style="left:1010.50px;top:891.00px;font-size:16px;color:#1f1f1f;transform:scaleX(0.9622);">2/21/2017</span>
<span class="t" style="left:-0.50px;top:129.00px;font-size:17px;color:#121212;transform:scaleX(1.0033);">p</span>
<span class="t" style="left:-5.00px;top:209.00px;font-size:17.5px;color:#121212;transform:scaleX(0.8385);">ev</span>
</body></html>
